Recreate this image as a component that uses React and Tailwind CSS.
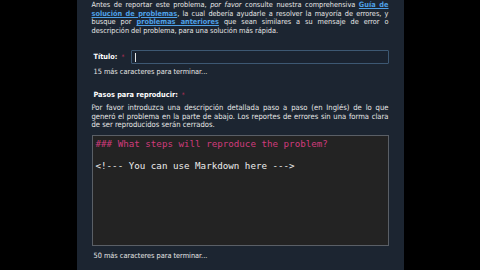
import React from 'react';

const App = () => {
    return (
        <div className="w-[480px] h-[270px] bg-black flex justify-center overflow-hidden" style={{ fontFamily: '"DejaVu Sans Condensed", "DejaVu Sans", sans-serif' }}>
            <div className="w-[327px] h-full bg-[#1c2531] pl-[15px] pr-[15px] text-[#e6e6e6]">
                {/* Intro */}
                <p className="text-[7.3px] leading-[8.6px] text-justify pt-[1px]">
                    Antes de reportar este problema, <i>por favor</i> consulte nuestra comprehensiva{' '}
                    <a className="text-[#4ea0e6] font-bold underline">Guía de solución de problemas</a>, la cual debería ayudarle a resolver la mayoría de errores, y busque por{' '}
                    <a className="text-[#4ea0e6] font-bold underline">problemas anteriores</a> que sean similares a su mensaje de error o descripción del problema, para una solución más rápida.
                </p>

                {/* Title */}
                <div className="flex items-center mt-[15px] pl-[2px]">
                    <span className="text-[7.3px] font-bold text-white">Título:</span>
                    <span className="text-[6.5px] text-[#c0305a] ml-[4px]">*</span>
                    <div className="ml-auto w-[258px] h-[14px] border border-[#3d5873] bg-[#1a2330] rounded-[1px] flex items-center pl-[3px]">
                        <div className="w-[1px] h-[9px] bg-[#e6e6e6]" />
                    </div>
                </div>
                <div className="text-[7.3px] mt-[3px] pl-[2px]">15 más caracteres para terminar...</div>

                {/* Steps */}
                <div className="flex items-center mt-[12px] pl-[2px]">
                    <span className="text-[7.3px] font-bold text-white">Pasos para reproducir:</span>
                    <span className="text-[6.5px] text-[#c0305a] ml-[4px]">*</span>
                </div>
                <p className="text-[7.6px] leading-[8.4px] text-justify mt-[3px]">
                    Por favor introduzca una descripción detallada paso a paso (en Inglés) de lo que generó el problema en la parte de abajo. Los reportes de errores sin una forma clara de ser reproducidos serán cerrados.
                </p>
                <div className="mt-[6px] h-[111px] bg-[#232323] border border-[#5a5f66] px-[3px] pt-[2px]" style={{ fontFamily: '"DejaVu Sans Mono", monospace' }}>
                    <div className="text-[9.2px] leading-[11px] text-[#d03b7c]">### What steps will reproduce the problem?</div>
                    <div className="text-[9.2px] leading-[11px] text-[#ececec] mt-[11px]">&lt;!--- You can use Markdown here ---&gt;</div>
                </div>
                <div className="text-[7.3px] mt-[5px] pl-[2px]">50 más caracteres para terminar...</div>
            </div>
        </div>
    );
};

export default App;
